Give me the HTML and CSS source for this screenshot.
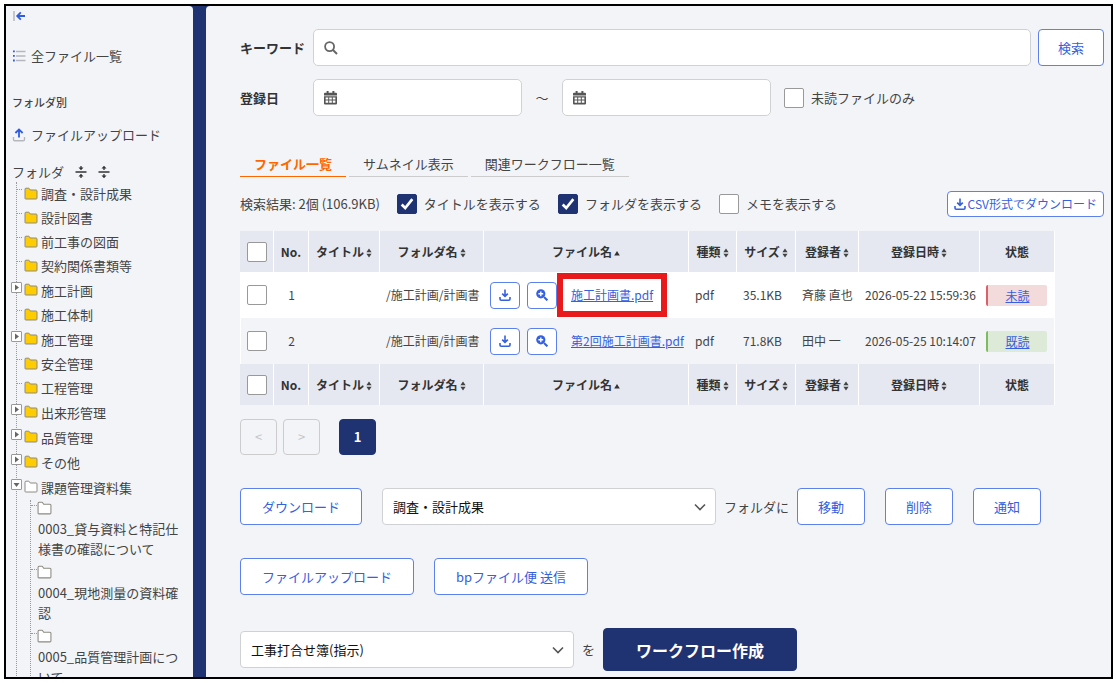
FILE: index.html
```
<!DOCTYPE html>
<html lang="ja">
<head>
<meta charset="UTF-8">
<meta name="viewport" content="width=device-width, initial-scale=1.0">
<title>ファイル一覧</title>
<link rel="stylesheet" href="styles.css">
</head>
<body>

<svg class="sprite" aria-hidden="true">
  <symbol id="folder" viewBox="0 0 14 13">
    <path d="M1 11.5V2.2Q1 1.2 2 1.2H4.6Q5.2 1.2 5.5 1.8L6.2 3H12Q13 3 13 4V11.2Q13 12 12 12H1.8Q1 12 1 11.5Z" stroke="#8c8a80" stroke-width="1"/>
  </symbol>
  <symbol id="sort" viewBox="0 0 6 10">
    <path d="M3 0.5L5.6 4.3H0.4ZM0.4 5.7H5.6L3 9.5Z" fill="#444"/>
  </symbol>
  <symbol id="sort-up" viewBox="0 0 6 10">
    <path d="M3 3L5.8 7.5H0.2Z" fill="#333"/>
  </symbol>
  <symbol id="download" viewBox="0 0 12 12">
    <path d="M6 0.5V7M3.2 4.6L6 7.4L8.8 4.6M1 8V10Q1 11.2 2.2 11.2H9.8Q11 11.2 11 10V8" fill="none" stroke="#3560e0" stroke-width="1.6"/>
  </symbol>
  <symbol id="zoom-in" viewBox="0 0 12 12">
    <circle cx="4.8" cy="4.8" r="4.6" fill="#3560e0"/>
    <path d="M8 8L11.4 11.4" stroke="#3560e0" stroke-width="2"/>
    <path d="M4.8 2.4V7.2M2.4 4.8H7.2" stroke="#fff" stroke-width="1.4"/>
  </symbol>
  <symbol id="calendar" viewBox="0 0 13 14">
    <path d="M2.6 0H4.6V1.8H8.4V0H10.4V1.8H12Q13 1.8 13 2.8V4.4H0V2.8Q0 1.8 1 1.8H2.6Z" fill="#555"/>
    <path d="M0 5.2H13V12.6Q13 13.6 12 13.6H1Q0 13.6 0 12.6ZM1.6 6.4V8.6H4.2V6.4ZM5.2 6.4V8.6H7.8V6.4ZM8.8 6.4V8.6H11.4V6.4ZM1.6 9.6V11.8H4.2V9.6ZM5.2 9.6V11.8H7.8V9.6ZM8.8 9.6V11.8H11.4V9.6Z" fill="#555" fill-rule="evenodd"/>
  </symbol>
</svg>

<div class="frame">
  <nav class="sidebar">
    <button class="side-toggle" aria-label="メニューを閉じる">
      <svg width="14" height="12" viewBox="0 0 14 12"><path d="M2 1V11" stroke="#b5b7bd" stroke-width="1.5"/><path d="M13 6H5.5M8.8 2.4L5.2 6L8.8 9.6" fill="none" stroke="#2f5be0" stroke-width="1.8"/></svg>
    </button>
    <a href="#" class="side-link all-files">
      <svg width="14" height="12" viewBox="0 0 14 12"><path d="M4 1.5H13.5M4 6H13.5M4 10.5H13.5" stroke="#b5b7bd" stroke-width="1.3"/><path d="M1 0.5H2.8V2.3H1ZM1 5H2.8V6.8H1ZM1 9.6H2.8V11.4H1Z" fill="#2f5be0"/></svg>
      全ファイル一覧
    </a>
    <h2 class="side-heading">フォルダ別</h2>
    <a href="#" class="side-link upload">
      <svg width="14" height="14" viewBox="0 0 14 14"><path d="M1.5 9V11.5Q1.5 12.8 2.8 12.8H11.2Q12.5 12.8 12.5 11.5V9" fill="none" stroke="#b5b7bd" stroke-width="1.4"/><path d="M7 9.5V2M3.4 5L7 1.4L10.6 5" fill="none" stroke="#2f5be0" stroke-width="1.8"/></svg>
      ファイルアップロード
    </a>
    <div class="tree-head">
      <span>フォルダ</span>
      <button aria-label="すべて閉じる"><svg width="12" height="14" viewBox="0 0 12 14"><path d="M0.5 7H11.5M6 1V3M6 11V13" stroke="#333" stroke-width="1.3"/><path d="M3.5 2.5H8.5L6 5.2ZM3.5 11.5H8.5L6 8.8Z" fill="#333"/></svg></button>
      <button aria-label="すべて開く"><svg width="12" height="14" viewBox="0 0 12 14"><path d="M0.5 7H11.5M6 3V5M6 9V11" stroke="#333" stroke-width="1.3"/><path d="M3.5 3.5H8.5L6 0.8ZM3.5 10.5H8.5L6 13.2Z" fill="#333"/></svg></button>
    </div>

    <ul class="tree">
      <li><a href="#"><svg class="folder"><use href="#folder"/></svg>調査・設計成果</a></li>
      <li><a href="#"><svg class="folder"><use href="#folder"/></svg>設計図書</a></li>
      <li><a href="#"><svg class="folder"><use href="#folder"/></svg>前工事の図面</a></li>
      <li><a href="#"><svg class="folder"><use href="#folder"/></svg>契約関係書類等</a></li>
      <li class="parent"><button class="expander" aria-label="開く"></button><a href="#"><svg class="folder"><use href="#folder"/></svg>施工計画</a></li>
      <li><a href="#"><svg class="folder"><use href="#folder"/></svg>施工体制</a></li>
      <li class="parent"><button class="expander" aria-label="開く"></button><a href="#"><svg class="folder"><use href="#folder"/></svg>施工管理</a></li>
      <li><a href="#"><svg class="folder"><use href="#folder"/></svg>安全管理</a></li>
      <li><a href="#"><svg class="folder"><use href="#folder"/></svg>工程管理</a></li>
      <li class="parent"><button class="expander" aria-label="開く"></button><a href="#"><svg class="folder"><use href="#folder"/></svg>出来形管理</a></li>
      <li class="parent"><button class="expander" aria-label="開く"></button><a href="#"><svg class="folder"><use href="#folder"/></svg>品質管理</a></li>
      <li class="parent"><button class="expander" aria-label="開く"></button><a href="#"><svg class="folder"><use href="#folder"/></svg>その他</a></li>
      <li class="parent"><button class="expander open" aria-label="閉じる"></button><a href="#"><svg class="folder empty"><use href="#folder"/></svg>課題管理資料集</a>
        <ul class="subtree">
          <li><a href="#"><svg class="folder empty"><use href="#folder"/></svg><span>0003_貸与資料と特記仕様書の確認について</span></a></li>
          <li><a href="#"><svg class="folder empty"><use href="#folder"/></svg><span>0004_現地測量の資料確認</span></a></li>
          <li><a href="#"><svg class="folder empty"><use href="#folder"/></svg><span>0005_品質管理計画について</span></a></li>
        </ul>
      </li>
    </ul>
  </nav>

  <main class="main">
    <form class="search">
      <div class="search-row">
        <label class="search-label" for="keyword">キーワード</label>
        <div class="field keyword">
          <svg width="14" height="14" viewBox="0 0 14 14"><circle cx="5.6" cy="5.6" r="4.5" fill="none" stroke="#666" stroke-width="1.8"/><path d="M9 9L13 13" stroke="#666" stroke-width="2"/></svg>
          <input type="text" id="keyword" name="keyword">
        </div>
        <button type="button" class="btn search-btn">検索</button>
      </div>
      <div class="search-row">
        <label class="search-label" for="date-from">登録日</label>
        <div class="field date">
          <svg width="13" height="14"><use href="#calendar"/></svg>
          <input type="text" id="date-from" name="from">
        </div>
        <span class="tilde">～</span>
        <div class="field date">
          <svg width="13" height="14"><use href="#calendar"/></svg>
          <input type="text" id="date-to" name="to" aria-label="登録日（終了）">
        </div>
        <label class="check unread-only"><input type="checkbox" name="unread">未読ファイルのみ</label>
      </div>
    </form>

    <div class="tabs">
      <a href="#" class="active">ファイル一覧</a>
      <a href="#">サムネイル表示</a>
      <a href="#">関連ワークフロー一覧</a>
    </div>

    <div class="result-bar">
      <span>検索結果: 2個 (106.9KB)</span>
      <label class="check"><input type="checkbox" checked>タイトルを表示する</label>
      <label class="check"><input type="checkbox" checked>フォルダを表示する</label>
      <label class="check"><input type="checkbox">メモを表示する</label>
      <button class="btn csv"><svg width="12" height="12"><use href="#download"/></svg>CSV形式でダウンロード</button>
    </div>

    <table class="files">
      <colgroup>
        <col class="c-check"><col class="c-no"><col class="c-title"><col class="c-folder"><col class="c-file">
        <col class="c-type"><col class="c-size"><col class="c-user"><col class="c-date"><col class="c-status">
      </colgroup>
      <thead>
        <tr>
          <th><input type="checkbox" aria-label="すべて選択"></th>
          <th>No.</th>
          <th><button>タイトル<svg><use href="#sort"/></svg></button></th>
          <th><button>フォルダ名<svg><use href="#sort"/></svg></button></th>
          <th><button>ファイル名<svg><use href="#sort-up"/></svg></button></th>
          <th><button>種類<svg><use href="#sort"/></svg></button></th>
          <th><button>サイズ<svg><use href="#sort"/></svg></button></th>
          <th><button>登録者<svg><use href="#sort"/></svg></button></th>
          <th><button>登録日時<svg><use href="#sort"/></svg></button></th>
          <th>状態</th>
        </tr>
      </thead>
      <tbody>
        <tr>
          <td><input type="checkbox" aria-label="1を選択"></td>
          <td class="no">1</td>
          <td></td>
          <td>/施工計画/計画書</td>
          <td>
            <div class="file">
              <button class="btn icon" aria-label="ダウンロード"><svg width="12" height="12"><use href="#download"/></svg></button>
              <button class="btn icon" aria-label="プレビュー"><svg width="12" height="12"><use href="#zoom-in"/></svg></button>
              <a href="#" class="marked">施工計画書.pdf</a>
            </div>
          </td>
          <td>pdf</td>
          <td>35.1KB</td>
          <td>斉藤 直也</td>
          <td>2026-05-22 15:59:36</td>
          <td><a href="#" class="status unread">未読</a></td>
        </tr>
        <tr>
          <td><input type="checkbox" aria-label="2を選択"></td>
          <td class="no">2</td>
          <td></td>
          <td>/施工計画/計画書</td>
          <td>
            <div class="file">
              <button class="btn icon" aria-label="ダウンロード"><svg width="12" height="12"><use href="#download"/></svg></button>
              <button class="btn icon" aria-label="プレビュー"><svg width="12" height="12"><use href="#zoom-in"/></svg></button>
              <a href="#">第2回施工計画書.pdf</a>
            </div>
          </td>
          <td>pdf</td>
          <td>71.8KB</td>
          <td>田中 一</td>
          <td>2026-05-25 10:14:07</td>
          <td><a href="#" class="status read">既読</a></td>
        </tr>
      </tbody>
      <tfoot>
        <tr>
          <th><input type="checkbox" aria-label="すべて選択"></th>
          <th>No.</th>
          <th><button>タイトル<svg><use href="#sort"/></svg></button></th>
          <th><button>フォルダ名<svg><use href="#sort"/></svg></button></th>
          <th><button>ファイル名<svg><use href="#sort-up"/></svg></button></th>
          <th><button>種類<svg><use href="#sort"/></svg></button></th>
          <th><button>サイズ<svg><use href="#sort"/></svg></button></th>
          <th><button>登録者<svg><use href="#sort"/></svg></button></th>
          <th><button>登録日時<svg><use href="#sort"/></svg></button></th>
          <th>状態</th>
        </tr>
      </tfoot>
    </table>

    <div class="pager">
      <button disabled>&lt;</button>
      <button disabled>&gt;</button>
      <button class="current">1</button>
    </div>

    <div class="actions">
      <button class="btn">ダウンロード</button>
      <div class="move">
        <select id="folder-to" aria-label="移動先フォルダ">
          <option>調査・設計成果</option>
          <option>設計図書</option>
          <option>施工計画</option>
        </select>
        <label for="folder-to">フォルダに</label>
        <button class="btn short">移動</button>
      </div>
      <button class="btn short">削除</button>
      <button class="btn short">通知</button>
    </div>

    <div class="actions">
      <button class="btn">ファイルアップロード</button>
      <button class="btn">bpファイル便 送信</button>
    </div>

    <div class="actions">
      <div class="move">
        <select id="workflow">
          <option>工事打合せ簿(指示)</option>
        </select>
        <label for="workflow">を</label>
        <button class="btn primary">ワークフロー作成</button>
      </div>
    </div>
  </main>
</div>

</body>
</html>
```

FILE: styles.css
```
* {
  box-sizing: border-box;
}

body {
  margin: 0;
  padding: 4px 3px 4px 4px;
  height: 100vh;
  background-color: #fff;
  color: #444;
  font-family: "Noto Sans CJK JP", "Noto Sans", sans-serif;
  font-size: 13px;
  line-height: 20px;
}

button,
input,
select {
  font: inherit;
}

button {
  padding: 0;
  border: none;
  background: none;
  color: inherit;
  cursor: pointer;
}

a {
  color: inherit;
  text-decoration: none;
}

.sprite {
  display: none;
}

.frame {
  display: flex;
  height: 100%;
  border: 2px solid #000;
  background-color: #1f3372;
  overflow: hidden;
}

/* sidebar */
.sidebar {
  flex: 0 0 187px;
  padding: 0 5px 0 6px;
  border-radius: 0 4px 0 0;
  background-color: #f3f4f8;
  overflow: hidden;
}

.side-toggle {
  display: flex;
  align-items: center;
  height: 20px;
}

.side-link {
  display: flex;
  align-items: center;
  gap: 5px;
}

.all-files {
  margin-top: 20px;
}

.side-heading {
  margin: 26px 0 0;
  font-size: 11px;
  font-weight: 500;
  line-height: 20px;
}

.upload {
  margin-top: 13px;
}

.tree-head {
  display: flex;
  align-items: center;
  gap: 11px;
  margin-top: 17px;
}

.tree-head button {
  display: flex;
}

.tree,
.subtree {
  list-style: none;
  margin: 0;
  padding: 0;
}

.tree {
  margin-left: 4px;
  border-left: 1px dotted #999;
}

.tree > li {
  position: relative;
}

.tree a {
  display: flex;
  align-items: center;
  gap: 3px;
  height: 24px;
}

.tree .parent > a {
  height: 25px;
}

.tree a::before {
  content: "";
  align-self: flex-start;
  width: 5px;
  margin: 7px -1px 0 0;
  border-top: 1px dotted #999;
}

.folder {
  flex: none;
  width: 14px;
  height: 13px;
  margin-bottom: 2px;
  fill: #ffcc00;
}

.folder.empty {
  fill: #fff;
}

/* sits on top of the tree line */
.expander {
  position: absolute;
  top: 4px;
  left: -6px;
  width: 11px;
  height: 11px;
  border: 1px solid #999;
  border-radius: 1px;
  background: #fff url("data:image/svg+xml,%3Csvg xmlns='http://www.w3.org/2000/svg' viewBox='0 0 9 9'%3E%3Cpath d='M3 1.5L7 4.5L3 7.5Z' fill='%23666'/%3E%3C/svg%3E") center / 9px no-repeat;
}

.expander.open {
  background-image: url("data:image/svg+xml,%3Csvg xmlns='http://www.w3.org/2000/svg' viewBox='0 0 9 9'%3E%3Cpath d='M1.5 3L4.5 7L7.5 3Z' fill='%23666'/%3E%3C/svg%3E");
}

.subtree {
  margin-left: 13px;
  border-left: 1px dotted #999;
}

.subtree a {
  flex-wrap: wrap;
  gap: 0;
  height: auto;
  padding-bottom: 5px;
}

.subtree a::before {
  width: 6px;
  margin: 5px 0 0;
}

.subtree .folder {
  width: 15px;
  height: 14px;
  margin: 1px 0 4px;
}

.subtree span {
  flex: 0 0 100%;
  padding-left: 7px;
}

/* main */
.main {
  flex: 1;
  min-width: 0;
  margin-left: 13px;
  padding: 23px 7px 0 34px;
  border-radius: 4px 0 0 0;
  background-color: #f3f4f8;
  overflow: hidden;
}

.btn {
  height: 37px;
  padding: 0 21px;
  border: 1px solid #5c80ec;
  border-radius: 4px;
  background-color: #fff;
  color: #3560e0;
  white-space: nowrap;
}

.btn:hover {
  background-color: #eef2ff;
}

.btn.short {
  padding: 0 20px;
}

.search-row {
  display: flex;
  align-items: center;
  margin-bottom: 13px;
}

.search-label {
  width: 73px;
  color: #333;
  font-weight: bold;
}

.field {
  display: flex;
  align-items: center;
  gap: 8px;
  height: 37px;
  padding: 0 10px;
  border: 1px solid #d0d1d4;
  border-radius: 5px;
  background-color: #fff;
}

.field svg {
  flex: none;
}

.field input {
  flex: 1;
  min-width: 0;
  border: none;
  outline: none;
  background: none;
}

.field.keyword {
  flex: 1;
}

.field.date {
  width: 209px;
}

.search-btn {
  margin-left: 7px;
  padding: 0 19px;
}

.tilde {
  width: 40px;
  text-align: center;
}

.check {
  display: flex;
  align-items: center;
  gap: 7px;
}

.unread-only {
  margin-left: 13px;
}

input[type="checkbox"] {
  appearance: none;
  width: 20px;
  height: 20px;
  margin: 0;
  border: 1px solid #999;
  border-radius: 2px;
  background-color: #fff;
}

input[type="checkbox"]:checked {
  border-color: #1f3372;
  background: #1f3372 url("data:image/svg+xml,%3Csvg xmlns='http://www.w3.org/2000/svg' viewBox='0 0 18 18'%3E%3Cpath d='M3 9.5L7 13.5L15 3.5' fill='none' stroke='%23fff' stroke-width='3'/%3E%3C/svg%3E") center / 16px no-repeat;
}

.tabs {
  display: flex;
  gap: 3px;
  margin-top: 35px;
}

.tabs a {
  padding: 3px 14px 2px;
  border-bottom: 1px solid #ccc;
}

.tabs a.active {
  border-color: #ff6600;
  color: #ff6600;
  font-weight: bold;
}

.result-bar {
  display: flex;
  align-items: center;
  gap: 17px;
  margin-top: 14px;
}

.btn.csv {
  display: flex;
  align-items: center;
  gap: 2px;
  height: 26px;
  margin-left: auto;
  padding: 0 6px;
  font-size: 12px;
}

/* file table */
.files {
  margin-top: 14px;
  border-spacing: 0;
  table-layout: fixed;
  width: 815px;
  max-width: 100%;
  font-size: 12px;
}

.c-check { width: 34px; }
.c-no { width: 35px; }
.c-title { width: 71px; }
.c-folder { width: 104px; }
.c-file { width: 205px; }
.c-type { width: 48px; }
.c-size { width: 59px; }
.c-user { width: 63px; }
.c-date { width: 121px; }
.c-status { width: 75px; }

.files th {
  height: 41px;
  padding: 0;
  border-right: 1px solid #fff;
  background-color: #e5e8f1;
  color: #333;
  white-space: nowrap;
}

.files th button {
  display: inline-flex;
  align-items: center;
  gap: 2px;
}

.files th svg {
  width: 6px;
  height: 10px;
  margin-top: 2px;
}

.files td {
  height: 46px;
  padding: 0 0 0 6px;
  white-space: nowrap;
}

.files tbody tr:first-child {
  background-color: #fff;
}

.files td:first-child {
  border-left: 1px solid #fff;
}

.files td:last-child {
  border-right: 1px solid #fff;
  padding-right: 7px;
}

.files input {
  display: block;
}

.files th input {
  margin-left: 7px;
}

.files .no {
  padding: 0;
  text-align: center;
}

.file {
  display: flex;
  align-items: center;
  gap: 7px;
}

.file a {
  position: relative;
  margin-left: 7px;
  color: #3560e0;
  text-decoration: underline;
}

.btn.icon {
  display: flex;
  align-items: center;
  justify-content: center;
  width: 30px;
  height: 27px;
  padding: 0;
}

.marked::after {
  content: "";
  position: absolute;
  inset: -12px -14px;
  border: 6px solid #e81a1c;
  pointer-events: none;
}

.status {
  display: block;
  border-left: 2px solid;
  border-radius: 2px;
  color: #3560e0;
  line-height: 21px;
  text-align: center;
  text-decoration: underline;
}

.unread {
  border-color: #d9616a;
  background-color: #f3dadb;
}

.read {
  border-color: #7cbb5e;
  background-color: #deead8;
}

.pager {
  display: flex;
  gap: 6px;
  margin-top: 14px;
}

.pager button {
  width: 37px;
  height: 36px;
  border: 1px solid #ccc;
  border-radius: 4px;
  color: #c4c5c8;
}

.pager .current {
  margin-left: 13px;
  border-color: #1f3372;
  background-color: #1f3372;
  color: #fff;
  font-weight: bold;
}

.actions {
  display: flex;
  align-items: center;
  gap: 20px;
  margin-top: 33px;
}

.move {
  display: flex;
  align-items: center;
  gap: 8px;
}

.move select {
  appearance: none;
  width: 334px;
  height: 37px;
  padding: 0 30px 0 10px;
  border: 1px solid #d0d1d4;
  border-radius: 4px;
  background: #fff url("data:image/svg+xml,%3Csvg xmlns='http://www.w3.org/2000/svg' viewBox='0 0 12 8'%3E%3Cpath d='M1 1.5L6 6.5L11 1.5' fill='none' stroke='%23555' stroke-width='1.6'/%3E%3C/svg%3E") right 9px center / 12px 8px no-repeat;
  color: #111;
}

.btn.primary {
  height: 43px;
  padding: 0 32px;
  border-color: #1f3372;
  background-color: #1f3372;
  color: #fff;
  font-size: 16px;
  font-weight: bold;
}
```
